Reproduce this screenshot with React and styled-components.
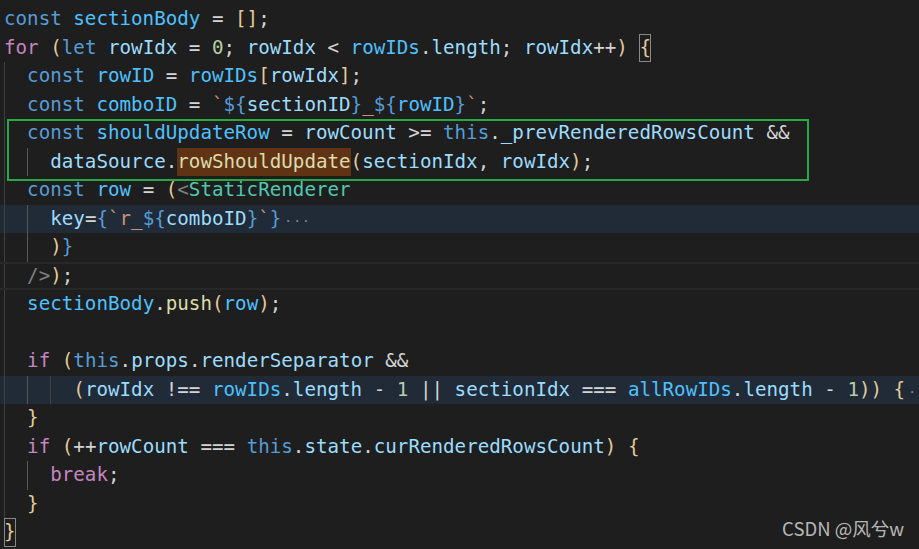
import React from "react";
import styled, { createGlobalStyle } from "styled-components";

const GlobalStyle = createGlobalStyle`
  html, body {
    margin: 0;
    padding: 0;
    background: #1e1e1e;
  }
`;

const COLORS = {
  kw: "#569cd6",
  ctl: "#c586c0",
  cst: "#4fc1ff",
  v: "#9cdcfe",
  fn: "#dcdcaa",
  num: "#b5cea8",
  str: "#ce9178",
  p: "#d4d4d4",
  br: "#e4c99a",
  tag: "#808080",
  cmp: "#4ec9b0",
};

const Editor = styled.div`
  position: relative;
  display: flex;
  flex-direction: column;
  width: 919px;
  height: 549px;
  overflow: hidden;
  background: #1e1e1e;
  padding-top: 5px;
  box-sizing: border-box;
  font-family: "DejaVu Sans Mono", "Liberation Mono", monospace;
  font-size: 19.2px;
`;

/* indent guides painted as 1px background strips, one per level */
const guideLayers = (depth) => {
  if (!depth) return "";
  const imgs = [];
  const pos = [];
  for (let i = 0; i < depth; i++) {
    const c = i === 1 ? "#585858" : "#404040";
    imgs.push(`linear-gradient(${c}, ${c})`);
    pos.push(`${4 + i * 23.1}px 0`);
  }
  return `
    background-image: ${imgs.join(", ")};
    background-position: ${pos.join(", ")};
    background-size: 1px 100%;
    background-repeat: no-repeat;
  `;
};

const Line = styled.div`
  flex: 0 0 28.5px;
  height: 28.5px;
  line-height: 28.5px;
  padding-left: 4px;
  white-space: pre;
  color: #d4d4d4;
  background-color: ${(p) => (p.$folded ? "#212b37" : "transparent")};
  ${(p) => guideLayers(p.$depth)}
  box-shadow: ${(p) =>
    p.$current ? "inset 0 2px 0 #282828, inset 0 -2px 0 #282828" : "none"};
`;

const Tok = styled.span`
  color: ${(p) => COLORS[p.$t] || "#d4d4d4"};
`;

const Match = styled.span`
  display: inline-block;
  height: 28.5px;
  vertical-align: top;
  box-shadow: inset 0 0 0 1px #888888;
`;

const WordHit = styled.span`
  display: inline-block;
  height: 28.5px;
  vertical-align: top;
  background: #613315;
  color: #dcdcaa;
`;

const FoldDots = styled.span`
  color: #8c8c8c;
  font-size: 13px;
  letter-spacing: 1px;
  padding-left: 3px;
`;

const Annotation = styled.div`
  position: absolute;
  left: 7px;
  top: 119px;
  width: 802px;
  height: 62px;
  box-sizing: border-box;
  border: 2px solid #28a845;
  pointer-events: none;
`;

const Watermark = styled.div`
  position: absolute;
  right: 15px;
  bottom: 8px;
  font-family: "Noto Sans CJK SC", "Liberation Sans", sans-serif;
  font-size: 18.5px;
  color: #c4c4c4;
  opacity: 0.92;
`;

// [type, text] pairs per line
const lines = [
  { depth: 0, toks: [["kw", "const "], ["cst", "sectionBody"], ["p", " = "], ["br", "[]"], ["p", ";"]] },
  {
    depth: 0,
    toks: [
      ["ctl", "for"], ["p", " "], ["br", "("], ["kw", "let "], ["v", "rowIdx"], ["p", " = "], ["num", "0"],
      ["p", "; "], ["v", "rowIdx"], ["p", " < "], ["cst", "rowIDs"], ["p", "."], ["v", "length"], ["p", "; "],
      ["v", "rowIdx"], ["p", "++"], ["br", ")"], ["p", " "], ["match", "{"],
    ],
  },
  { depth: 1, toks: [["p", "  "], ["kw", "const "], ["cst", "rowID"], ["p", " = "], ["cst", "rowIDs"], ["br", "["], ["v", "rowIdx"], ["br", "]"], ["p", ";"]] },
  {
    depth: 1,
    toks: [
      ["p", "  "], ["kw", "const "], ["cst", "comboID"], ["p", " = "], ["str", "`"], ["kw", "${"], ["v", "sectionID"],
      ["kw", "}"], ["str", "_"], ["kw", "${"], ["cst", "rowID"], ["kw", "}"], ["str", "`"], ["p", ";"],
    ],
  },
  {
    depth: 1,
    toks: [
      ["p", "  "], ["kw", "const "], ["cst", "shouldUpdateRow"], ["p", " = "], ["v", "rowCount"], ["p", " >= "],
      ["kw", "this"], ["p", "."], ["v", "_prevRenderedRowsCount"], ["p", " &&"],
    ],
  },
  {
    depth: 2,
    toks: [
      ["p", "    "], ["v", "dataSource"], ["p", "."], ["hit", "rowShouldUpdate"], ["br", "("], ["v", "sectionIdx"],
      ["p", ", "], ["v", "rowIdx"], ["br", ")"], ["p", ";"],
    ],
  },
  { depth: 1, toks: [["p", "  "], ["kw", "const "], ["cst", "row"], ["p", " = "], ["br", "("], ["tag", "<"], ["cmp", "StaticRenderer"]] },
  {
    depth: 2,
    folded: true,
    toks: [
      ["p", "    "], ["v", "key"], ["p", "="], ["kw", "{"], ["str", "`r_"], ["kw", "${"], ["v", "comboID"], ["kw", "}"],
      ["str", "`"], ["kw", "}"], ["dots", "···"],
    ],
  },
  { depth: 2, toks: [["p", "    "], ["br", ")"], ["kw", "}"]] },
  { depth: 1, current: true, toks: [["p", "  "], ["tag", "/>"], ["br", ")"], ["p", ";"]] },
  { depth: 1, toks: [["p", "  "], ["cst", "sectionBody"], ["p", "."], ["fn", "push"], ["br", "("], ["cst", "row"], ["br", ")"], ["p", ";"]] },
  { depth: 1, toks: [] },
  {
    depth: 1,
    toks: [
      ["p", "  "], ["ctl", "if"], ["p", " "], ["br", "("], ["kw", "this"], ["p", "."], ["v", "props"], ["p", "."],
      ["v", "renderSeparator"], ["p", " &&"],
    ],
  },
  {
    depth: 3,
    folded: true,
    toks: [
      ["p", "      "], ["br", "("], ["v", "rowIdx"], ["p", " !== "], ["cst", "rowIDs"], ["p", "."], ["v", "length"],
      ["p", " - "], ["num", "1"], ["p", " || "], ["v", "sectionIdx"], ["p", " === "], ["cst", "allRowIDs"],
      ["p", "."], ["v", "length"], ["p", " - "], ["num", "1"], ["br", "))"], ["p", " "], ["br", "{"], ["dots", "···"],
    ],
  },
  { depth: 1, toks: [["p", "  "], ["br", "}"]] },
  {
    depth: 1,
    toks: [
      ["p", "  "], ["ctl", "if"], ["p", " "], ["br", "("], ["p", "++"], ["v", "rowCount"], ["p", " === "],
      ["kw", "this"], ["p", "."], ["v", "state"], ["p", "."], ["v", "curRenderedRowsCount"], ["br", ")"],
      ["p", " "], ["br", "{"],
    ],
  },
  { depth: 2, toks: [["p", "    "], ["ctl", "break"], ["p", ";"]] },
  { depth: 1, toks: [["p", "  "], ["br", "}"]] },
  { depth: 0, toks: [["match", "}"]] },
];

function Token({ type, text }) {
  if (type === "match") return <Match><Tok $t="br">{text}</Tok></Match>;
  if (type === "hit") return <WordHit>{text}</WordHit>;
  if (type === "dots") return <FoldDots>{text}</FoldDots>;
  return <Tok $t={type}>{text}</Tok>;
}

function CodeLine({ line }) {
  return (
    <Line $depth={line.depth} $folded={line.folded} $current={line.current}>
      {line.toks.map(([t, s], i) => (
        <Token key={i} type={t} text={s} />
      ))}
    </Line>
  );
}

export default function App() {
  return (
    <>
      <GlobalStyle />
      <Editor>
        {lines.map((line, i) => (
          <CodeLine key={i} line={line} />
        ))}
        <Annotation />
        <Watermark>CSDN @风兮w</Watermark>
      </Editor>
    </>
  );
}
